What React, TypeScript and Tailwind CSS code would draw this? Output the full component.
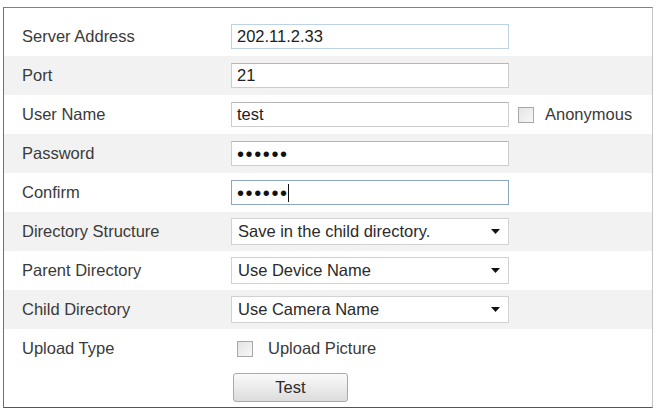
import React from 'react';

const font = { fontFamily: '"Liberation Sans", Arial, sans-serif' };

function Row({ label, shade, children }: { label: string; shade?: boolean; children: React.ReactNode }) {
  return (
    <div className={`flex items-center h-[39px] ${shade ? 'bg-[#f2f2f2]' : 'bg-white'}`}>
      <div className="w-[227px] pl-[18px] text-[16.5px] text-[#3a3a3a] shrink-0">{label}</div>
      <div className="flex items-center">{children}</div>
    </div>
  );
}

function TextBox({ children, border = 'border-[#cdcdcd] border-t-[#b5b5b5]' }: { children?: React.ReactNode; border?: string }) {
  return (
    <div className={`w-[278px] h-[25px] border ${border} bg-white flex items-center pl-[5px] text-[16.5px] text-[#222]`}>
      {children}
    </div>
  );
}

function Dots({ cursor }: { cursor?: boolean }) {
  return (
    <div className="flex items-center">
      <span className="text-[20px] leading-none tracking-[1.6px] text-[#111]">••••••</span>
      {cursor && <span className="w-[1.5px] h-[18px] bg-[#111] ml-[-1px]"></span>}
    </div>
  );
}

function Select({ value }: { value: string }) {
  return (
    <div className="w-[278px] h-[27px] border border-[#d2d2d2] bg-white flex items-center justify-between pl-[6px] pr-[8px] text-[16.5px] text-[#2a2a2a]">
      <span>{value}</span>
      <svg width="9" height="5" viewBox="0 0 9 5">
        <path d="M0 0 H9 L4.5 5 Z" fill="#111" />
      </svg>
    </div>
  );
}

function CheckBox() {
  return (
    <div className="w-[16px] h-[16px] border border-[#a8a8a8] bg-gradient-to-br from-[#e4e4e4] to-[#f7f7f7] shrink-0"></div>
  );
}

export default function App() {
  return (
    <div className="w-[656px] h-[409px] bg-white overflow-hidden pt-[7px] pl-[3px]" style={font}>
      <div className="w-[650px] h-[401px] border border-l-[#707070] border-t-[#808080] border-b-[#555] border-r-[#c4c4c4] pt-[9px]">
        <Row label="Server Address">
          <TextBox border="border-[#bdd3e3]">202.11.2.33</TextBox>
        </Row>
        <Row label="Port" shade>
          <TextBox>21</TextBox>
        </Row>
        <Row label="User Name">
          <TextBox>test</TextBox>
          <div className="flex items-center ml-[9px] gap-[11px]">
            <CheckBox />
            <span className="text-[16.5px] text-[#3a3a3a]">Anonymous</span>
          </div>
        </Row>
        <Row label="Password" shade>
          <TextBox>
            <Dots />
          </TextBox>
        </Row>
        <Row label="Confirm">
          <TextBox border="border-[#8ea6c4]">
            <Dots cursor />
          </TextBox>
        </Row>
        <Row label="Directory Structure" shade>
          <Select value="Save in the child directory." />
        </Row>
        <Row label="Parent Directory">
          <Select value="Use Device Name" />
        </Row>
        <Row label="Child Directory" shade>
          <Select value="Use Camera Name" />
        </Row>
        <Row label="Upload Type">
          <div className="flex items-center pl-[6px] gap-[15px]">
            <CheckBox />
            <span className="text-[16.5px] text-[#3a3a3a]">Upload Picture</span>
          </div>
        </Row>
        <div className="flex items-center h-[39px] pl-[229px]">
          <button className="w-[115px] h-[29px] rounded-[3px] border border-[#a9a9a9] bg-gradient-to-b from-[#fafafa] to-[#dcdcdc] text-[16.5px] text-[#2a2a2a]">
            Test
          </button>
        </div>
      </div>
    </div>
  );
}
